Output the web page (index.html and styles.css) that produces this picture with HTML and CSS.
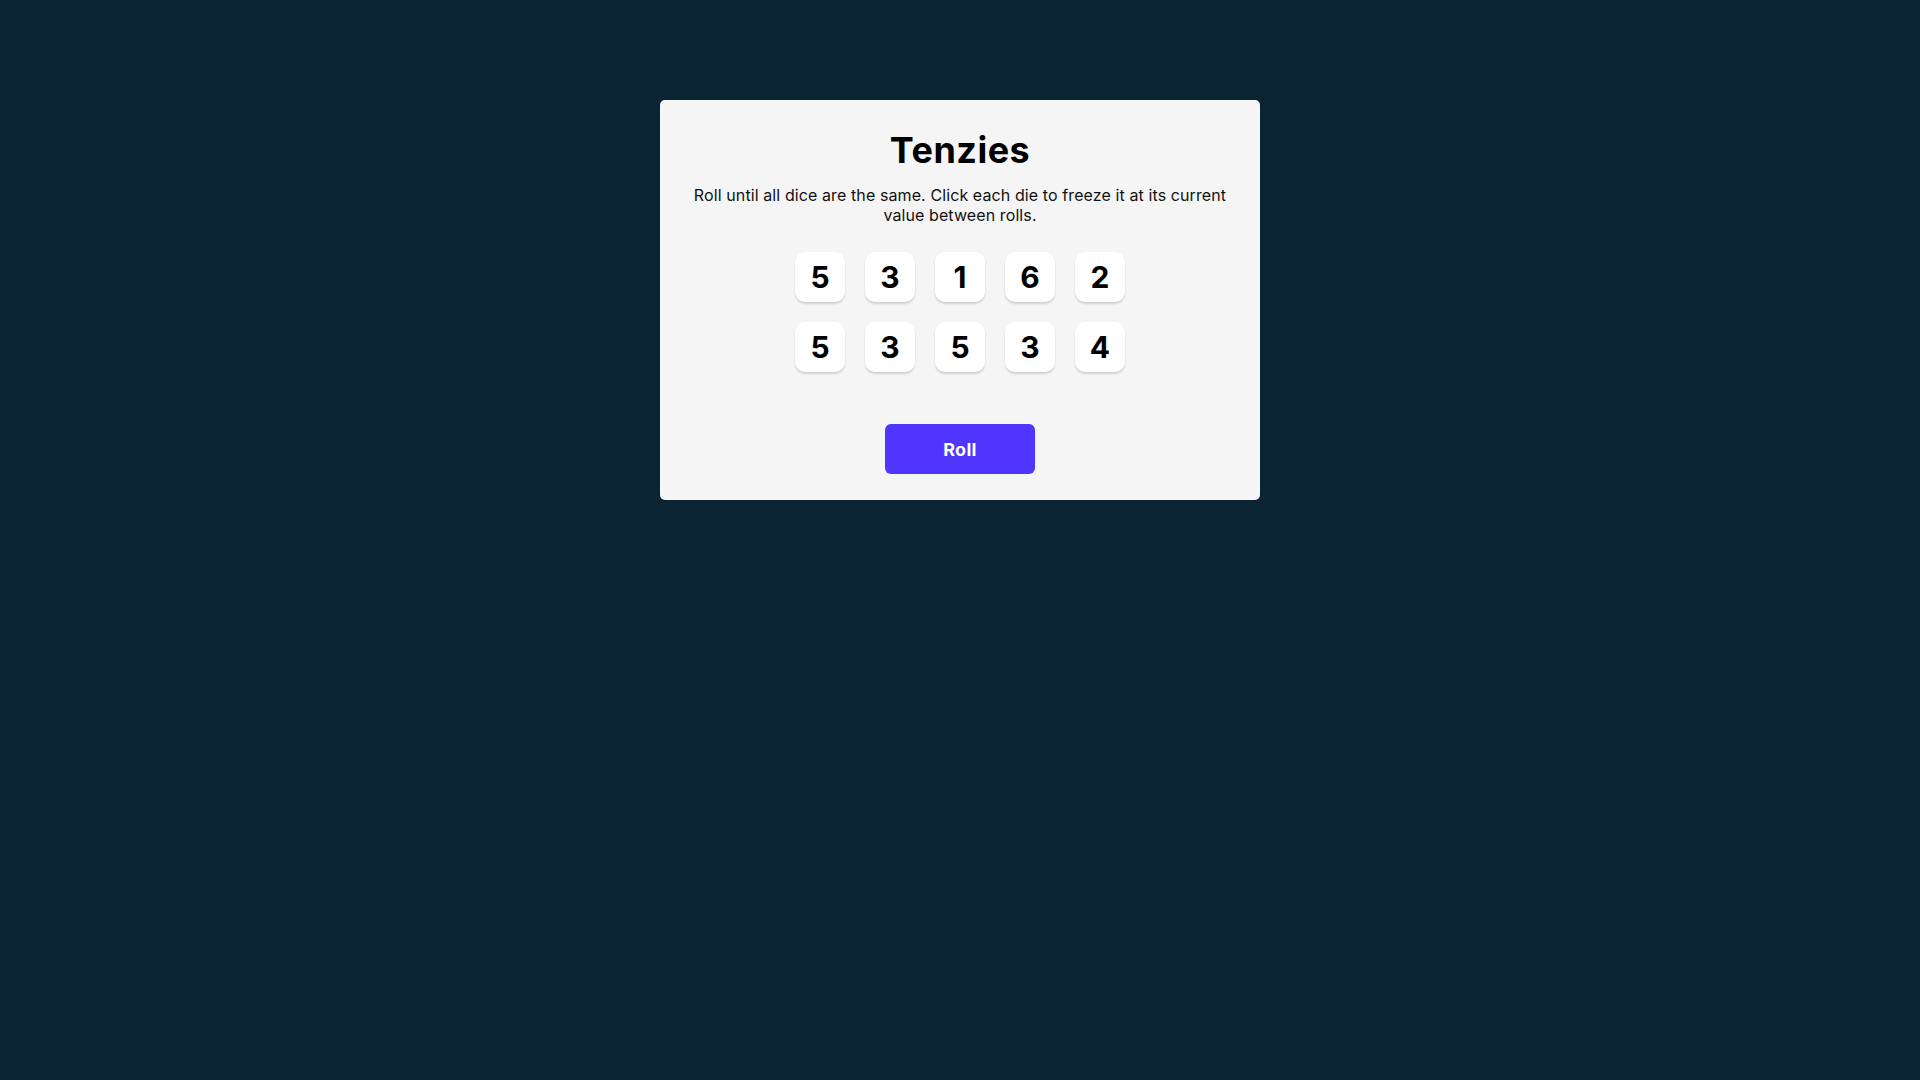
FILE: index.html
```html
<!DOCTYPE html>
<html lang="en">
<head>
<meta charset="UTF-8">
<title>Tenzies</title>
<link rel="stylesheet" href="styles.css">
</head>
<body>
<main class="card">
  <h1 class="title">Tenzies</h1>
  <p class="instructions">Roll until all dice are the same. Click each die to freeze it at its current value between rolls.</p>
  <div class="dice">
    <button class="die">5</button>
    <button class="die">3</button>
    <button class="die">1</button>
    <button class="die">6</button>
    <button class="die">2</button>
    <button class="die">5</button>
    <button class="die">3</button>
    <button class="die">5</button>
    <button class="die">3</button>
    <button class="die">4</button>
  </div>
  <button class="roll">Roll</button>
</main>
</body>
</html>
```
FILE: styles.css
```css
html, body {
  margin: 0;
  padding: 0;
}
body {
  background: #0B2434;
  min-height: 100vh;
  display: flex;
  flex-direction: column;
  align-items: center;
  padding-top: 100px;
  box-sizing: border-box;
  font-family: Inter, "Noto Sans", sans-serif;
}
.card {
  width: 600px;
  height: 400px;
  box-sizing: border-box;
  background: #F5F5F5;
  border-radius: 5px;
  padding: 28px 30px 0;
  display: flex;
  flex-direction: column;
  align-items: center;
}
.title {
  margin: 0;
  font-size: 36px;
  font-weight: 700;
  line-height: normal;
  color: #000;
  letter-spacing: 0.5px;
}
.instructions {
  margin: 13px 0 0;
  font-size: 16px;
  line-height: normal;
  text-align: center;
  color: #111;
  letter-spacing: 0.1px;
}
.dice {
  margin-top: 27px;
  display: grid;
  grid-template-columns: repeat(5, 50px);
  gap: 20px;
}
.die {
  width: 50px;
  height: 50px;
  border: none;
  border-radius: 10px;
  background: #FFFFFF;
  box-shadow: 0 2px 2px rgba(0, 0, 0, 0.15);
  font-family: Inter, "Noto Sans", sans-serif;
  font-size: 30px;
  font-weight: 700;
  color: #000;
  padding: 0;
  display: flex;
  align-items: center;
  justify-content: center;
}
.roll {
  margin-top: 52px;
  width: 150px;
  height: 50px;
  border: none;
  border-radius: 6px;
  background: #5035FF;
  color: #FFFFFF;
  font-family: Inter, "Noto Sans", sans-serif;
  font-size: 18px;
  font-weight: 700;
  letter-spacing: 0.3px;
  padding: 0;
}
```
